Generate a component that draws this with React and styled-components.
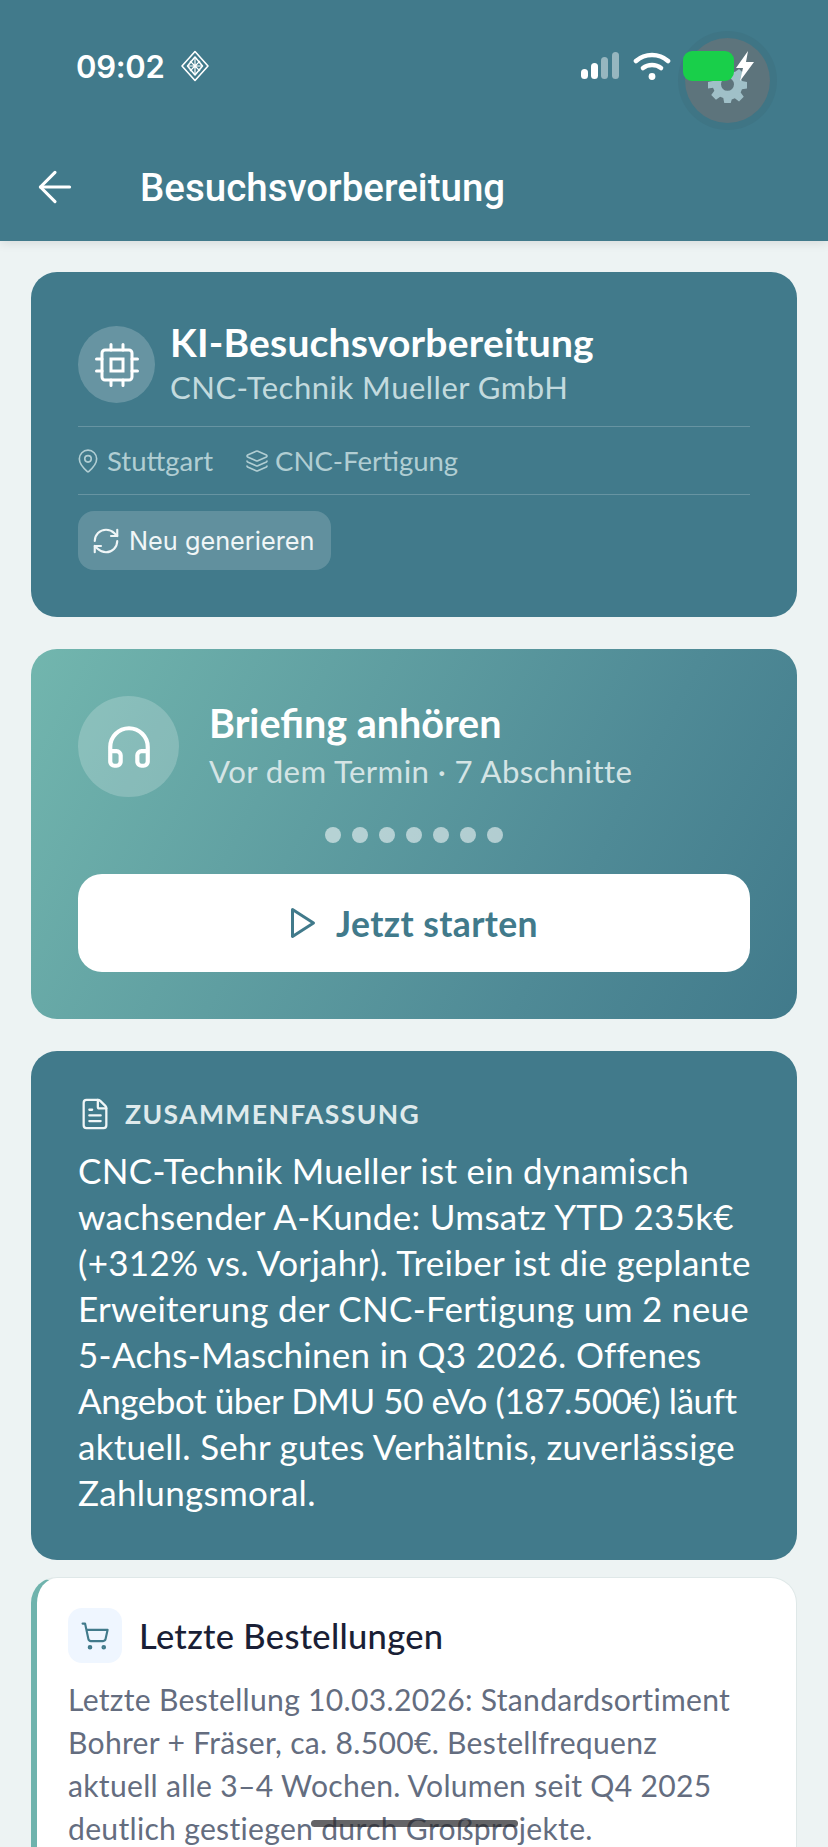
import React from 'react';
import styled, { createGlobalStyle } from 'styled-components';
import { ArrowLeft, MapPin, Layers, RefreshCw, Headphones, FileText, ShoppingCart } from 'lucide-react';

const GlobalStyle = createGlobalStyle`
  html, body { margin: 0; padding: 0; background: #edf3f3; }
  * { box-sizing: border-box; }
`;

const FONT = `Lato, "Open Sans", sans-serif`;

const Screen = styled.div`
  position: relative;
  width: 828px;
  height: 1847px;
  overflow: hidden;
  background: #edf3f3;
  font-family: ${FONT};
`;

const Header = styled.header`
  height: 241px;
  background: #417a8b;
  box-shadow: 0 2px 10px rgba(0, 0, 0, 0.1);
  padding: 48px 0 0;
  color: #fff;
`;

const StatusBar = styled.div`
  height: 36px;
  display: flex;
  align-items: center;
  padding: 0 72px 0 76px;
`;

const Clock = styled.span`
  font-family: Inter, sans-serif;
  font-size: 31px;
  font-weight: 600;
  letter-spacing: -0.3px;
  margin-right: 16px;
`;

const StatusRight = styled.div`
  margin-left: auto;
  display: flex;
  align-items: center;
  position: relative;
  z-index: 2;
`;

const Battery = styled.div`
  width: 51px;
  height: 30px;
  border-radius: 9px;
  background: #19cf4a;
  margin: 0 0 0 12px;
`;

const GearBubble = styled.div`
  position: absolute;
  left: 685px;
  top: 38px;
  width: 85px;
  height: 85px;
  border-radius: 50%;
  background: #5d747c;
  box-shadow: 0 0 0 7px #3f7585;
  display: flex;
  align-items: center;
  justify-content: center;
  padding-top: 5px;
`;

const NavBar = styled.div`
  height: 70px;
  margin-top: 68px;
  display: flex;
  align-items: center;
  padding-left: 30px;
`;

const NavTitle = styled.h1`
  margin: 0 0 0 60px;
  font-family: Roboto, sans-serif;
  font-size: 38.5px;
  font-weight: 500;
`;

const Content = styled.main`
  padding: 31px 31px 0;
`;

const Stack = styled.div`
  display: flex;
  flex-direction: column;
  gap: 32px;
  margin-bottom: 17px;
`;

const Card = styled.section`
  border-radius: 26px;
  background: ${p => p.$gradient ? 'linear-gradient(118deg, #72b6ae 0%, #4f8a96 70%, #417a8b 100%)' : '#417a8b'};
  color: #fff;
  padding: 47px 47px ${p => p.$bottom || 47}px;
`;

const Row = styled.div`
  display: flex;
  align-items: center;
  gap: ${p => p.$gap || 15}px;
`;

const IconCircle = styled.div`
  flex: none;
  width: ${p => p.$size}px;
  height: ${p => p.$size}px;
  border-radius: 50%;
  background: rgba(255, 255, 255, 0.2);
  display: flex;
  align-items: center;
  justify-content: center;
`;

const Title = styled.div`
  font-size: 39px;
  line-height: 46px;
  font-weight: 700;
  letter-spacing: 0.2px;
`;

const Subtitle = styled.div`
  font-size: 31px;
  line-height: 45px;
  color: #c3dade;
  letter-spacing: 0.5px;
`;

const MetaRow = styled.div`
  height: 69px;
  margin-top: 16px;
  border-top: 1px solid rgba(255, 255, 255, 0.2);
  border-bottom: 1px solid rgba(255, 255, 255, 0.2);
  display: flex;
  align-items: center;
  gap: 32px;
  color: #b1ced3;
  font-size: 27.5px;
`;

const MetaItem = styled.span`
  display: flex;
  align-items: center;
  gap: 6px;
  &:first-child { margin-left: -3px; }
`;

const GhostButton = styled.div`
  margin-top: 16px;
  width: 253px;
  height: 59px;
  border-radius: 16px;
  background: rgba(255, 255, 255, 0.17);
  display: flex;
  align-items: center;
  gap: 8px;
  padding-left: 13px;
  color: #f0f6f7;
  font-family: Inter, sans-serif;
  font-size: 25.3px;
`;

const BriefTitle = styled.div`
  font-size: 39.5px;
  line-height: 48px;
  font-weight: 700;
`;

const BriefSub = styled.div`
  font-size: 31.2px;
  line-height: 48px;
  color: #d4e4e5;
  letter-spacing: 0.4px;
`;

const Dots = styled.div`
  display: flex;
  justify-content: center;
  gap: 11px;
  margin: 30px 0 31px;
`;

const Dot = styled.span`
  width: 16px;
  height: 16px;
  border-radius: 50%;
  background: rgba(255, 255, 255, 0.55);
`;

const StartButton = styled.div`
  height: 98px;
  border-radius: 24px;
  background: #fff;
  color: #417a8b;
  display: flex;
  align-items: center;
  justify-content: center;
  gap: 20px;
  font-size: 35.5px;
  font-weight: 700;
  letter-spacing: 0.4px;
`;

const SummaryLabel = styled.div`
  display: flex;
  align-items: center;
  gap: 13px;
  height: 32px;
  margin-bottom: 17px;
  color: #dfeaec;
  font-size: 26.5px;
  font-weight: 700;
  letter-spacing: 1.4px;
`;

const SummaryText = styled.p`
  margin: 0;
  font-size: 35px;
  line-height: 46px;
  letter-spacing: 0.3px;
  color: #fff;
`;

const Line = styled.span`
  display: block;
  white-space: nowrap;
  ${p => p.$tight && 'letter-spacing: -0.43px;'}
`;

const DetailCard = styled.section`
  border-radius: 26px;
  background: #fff;
  border: 1px solid #dfe8e8;
  border-left: 6px solid #6fb3ad;
  padding: 30px 31px;
  height: 400px;
`;

const SmallIcon = styled.div`
  width: 54px;
  height: 55px;
  border-radius: 14px;
  background: #eff6ff;
  color: #417a8b;
  display: flex;
  align-items: center;
  justify-content: center;
`;

const DetailTitle = styled.div`
  font-size: 34.5px;
  font-weight: 500;
  color: #1a1f36;
  letter-spacing: 0.3px;
`;

const DetailText = styled.p`
  margin: 15px 0 0;
  font-size: 30.1px;
  line-height: 43px;
  color: #646d7f;
  letter-spacing: 0.3px;
`;

const HomeIndicator = styled.div`
  position: absolute;
  left: 311px;
  top: 1820px;
  width: 207px;
  height: 7px;
  border-radius: 4px;
  background: rgba(40, 40, 45, 0.72);
`;

const Diamond = () => (
  <svg width="30" height="32" viewBox="0 0 30 32" fill="none" stroke="#fff" strokeWidth="1.6" strokeLinejoin="round">
    <path d="M15 1.500 28 16 15 30.500 2 16Z" />
    <path d="M15 7 22.500 16 15 25 7.500 16Z" />
    <path d="M7.500 16H22.500M15 7V25M10 11l10 10M20 11 10 21" strokeWidth="1.2" />
  </svg>
);

const Signal = () => (
  <svg width="38" height="28" viewBox="0 0 38 28">
    <rect x="0" y="17" width="7" height="10" rx="3.500" fill="#fff" />
    <rect x="10" y="11" width="7" height="16" rx="3.500" fill="#fff" />
    <rect x="20" y="5" width="7" height="22" rx="3.500" fill="#fff" fillOpacity="0.45" />
    <rect x="31" y="0" width="7" height="27" rx="3.500" fill="#fff" fillOpacity="0.45" />
  </svg>
);

const WifiGlyph = () => (
  <svg width="38" height="30" viewBox="0 0 38 30" fill="none" stroke="#fff" strokeWidth="4.6" strokeLinecap="round" style={{ marginLeft: 14 }}>
    <path d="M3 10c9-8 23-8 32 0" />
    <path d="M10 17c5-4 13-4 18 0" />
    <circle cx="19" cy="25.500" r="3.400" fill="#fff" stroke="none" />
  </svg>
);

const Bolt = () => (
  <svg width="22" height="32" viewBox="0 0 22 32" fill="#fff">
    <path d="M14 1 2 18h7l-3 13 14-19h-8z" />
  </svg>
);

const Gear = () => (
  <svg width="39" height="39" viewBox="0 0 24 24" fill="#a0c0c8">
    <path fillRule="evenodd" d="M10 1h4l.6 3.100 1.900.8L19.100 3l2.900 2.900-1.900 2.600.8 1.900L24 11v4l-3.100.6-.8 1.900 1.900 2.600-2.900 2.900-2.600-1.900-1.900.8L14 24h-4l-.6-3.100-1.900-.8L4.900 22 2 19.100l1.900-2.600-.8-1.900L0 15v-4l3.100-.6.8-1.900L2 5.900 4.900 3l2.600 1.900 1.900-.8zM12 8.500a4 4 0 1 0 0 8 4 4 0 0 0 0-8z" />
  </svg>
);

const Chip = () => (
  <svg width="44" height="44" viewBox="0 0 44 44" fill="none" stroke="#fff" strokeWidth="3" strokeLinecap="round">
    <rect x="7" y="7" width="30" height="30" rx="3" />
    <rect x="16" y="16" width="12" height="12" />
    <path d="M16 1.500V7M28 1.500V7M16 37v5.500M28 37v5.500M1.500 16H7M1.500 28H7M37 16h5.500M37 28h5.500" />
  </svg>
);

const PlayOutline = () => (
  <svg width="26" height="32" viewBox="0 0 26 32" fill="none" stroke="currentColor" strokeWidth="3" strokeLinejoin="round">
    <path d="M2.500 2.500 23.500 16 2.500 29.500Z" />
  </svg>
);

const summaryLines = [
  { text: 'CNC-Technik Mueller ist ein dynamisch' },
  { text: 'wachsender A-Kunde: Umsatz YTD 235k€' },
  { text: '(+312% vs. Vorjahr). Treiber ist die geplante' },
  { text: 'Erweiterung der CNC-Fertigung um 2 neue' },
  { text: '5-Achs-Maschinen in Q3 2026. Offenes' },
  { text: 'Angebot über DMU 50 eVo (187.500€) läuft', tight: true },
  { text: 'aktuell. Sehr gutes Verhältnis, zuverlässige' },
  { text: 'Zahlungsmoral.' },
];

const orderLines = [
  'Letzte Bestellung 10.03.2026: Standardsortiment',
  'Bohrer + Fräser, ca. 8.500€. Bestellfrequenz',
  'aktuell alle 3–4 Wochen. Volumen seit Q4 2025',
  'deutlich gestiegen durch Großprojekte.',
];

const App = () => {
  return (
    <Screen>
      <GlobalStyle />
      <Header>
        <StatusBar>
          <Clock>09:02</Clock>
          <Diamond />
          <StatusRight>
            <Signal />
            <WifiGlyph />
            <Battery />
            <Bolt />
          </StatusRight>
        </StatusBar>
        <GearBubble><Gear /></GearBubble>
        <NavBar>
          <ArrowLeft size={50} strokeWidth={1.5} color="#fff" />
          <NavTitle>Besuchsvorbereitung</NavTitle>
        </NavBar>
      </Header>
      <Content>
        <Stack>
          <Card>
            <Row>
              <IconCircle $size={77}><Chip /></IconCircle>
              <div>
                <Title>KI-Besuchsvorbereitung</Title>
                <Subtitle>CNC-Technik Mueller GmbH</Subtitle>
              </div>
            </Row>
            <MetaRow>
              <MetaItem><MapPin size={26} strokeWidth={1.5} />Stuttgart</MetaItem>
              <MetaItem><Layers size={24} strokeWidth={1.6} />CNC-Fertigung</MetaItem>
            </MetaRow>
            <GhostButton><RefreshCw size={30} strokeWidth={1.7} />Neu generieren</GhostButton>
          </Card>
          <Card $gradient>
            <Row $gap={30}>
              <IconCircle $size={101}><Headphones size={50} strokeWidth={2} color="#fff" /></IconCircle>
              <div>
                <BriefTitle>Briefing anhören</BriefTitle>
                <BriefSub>Vor dem Termin · 7 Abschnitte</BriefSub>
              </div>
            </Row>
            <Dots>{[0, 1, 2, 3, 4, 5, 6].map(i => <Dot key={i} />)}</Dots>
            <StartButton><PlayOutline />Jetzt starten</StartButton>
          </Card>
          <Card $bottom={45}>
            <SummaryLabel><FileText size={34} strokeWidth={1.6} color="#f0f6f7" />ZUSAMMENFASSUNG</SummaryLabel>
            <SummaryText>{summaryLines.map(l => <Line key={l.text} $tight={l.tight}>{l.text}</Line>)}</SummaryText>
          </Card>
        </Stack>
        <DetailCard>
          <Row $gap={17}>
            <SmallIcon><ShoppingCart size={30} strokeWidth={1.7} /></SmallIcon>
            <DetailTitle>Letzte Bestellungen</DetailTitle>
          </Row>
          <DetailText>{orderLines.map(l => <Line key={l}>{l}</Line>)}</DetailText>
        </DetailCard>
      </Content>
      <HomeIndicator />
    </Screen>
  );
};

export default App;
